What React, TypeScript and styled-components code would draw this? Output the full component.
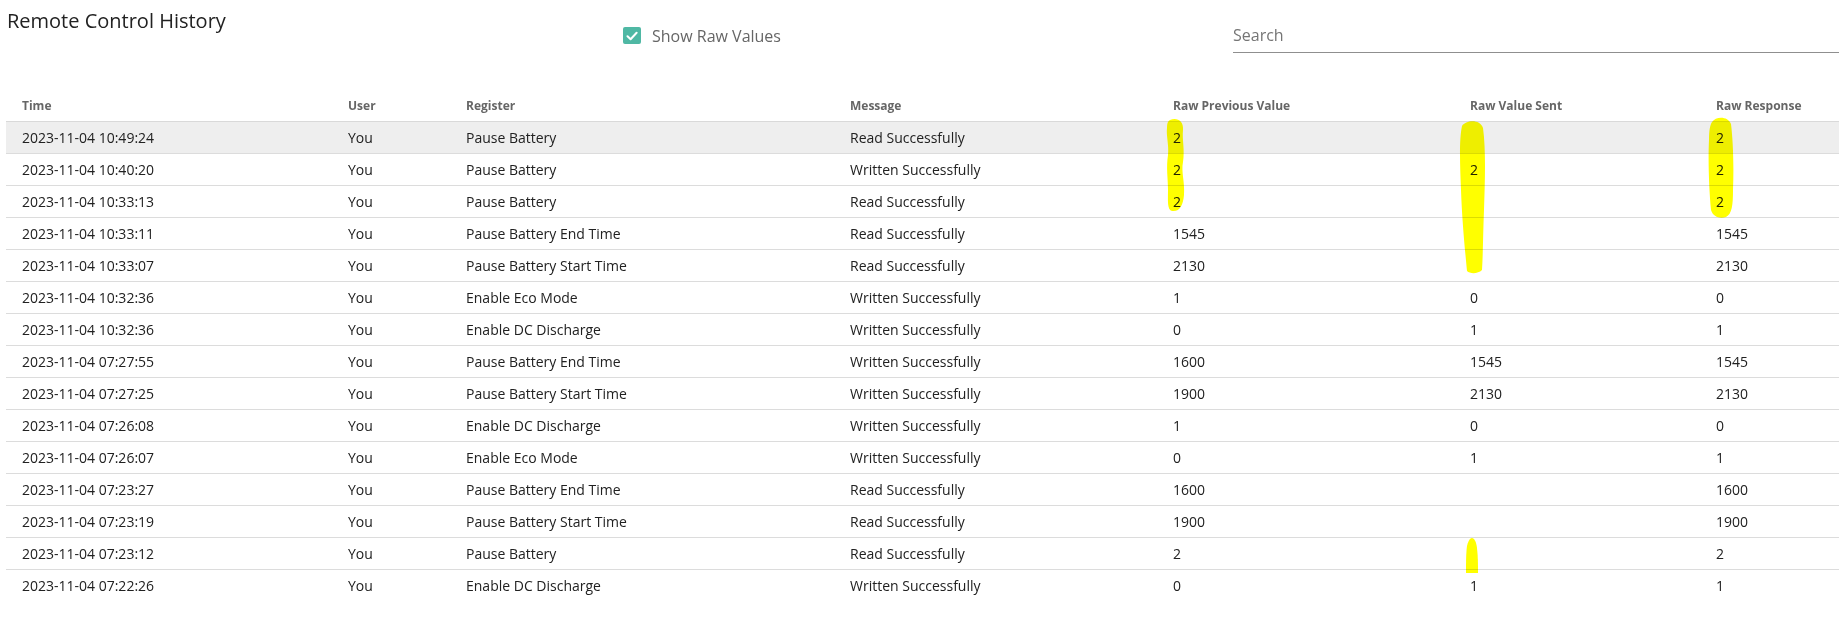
import React from "react";
import styled, { createGlobalStyle } from "styled-components";

const GlobalStyle = createGlobalStyle`
  html, body {
    margin: 0;
    padding: 0;
    background: #ffffff;
    font-family: "Open Sans", "Liberation Sans", sans-serif;
    color: #212121;
  }
  * { box-sizing: border-box; }
`;

const Page = styled.div`
  position: relative;
  width: 1839px;
  height: 632px;
  overflow: hidden;
  padding-left: 6px;
`;

const TopBar = styled.div`
  display: grid;
  grid-template-columns: 611px 611px 1fr;
  height: 89px;
`;

const Title = styled.h1`
  margin: 7px 0 0 1px;
  font-size: 20px;
  font-weight: 400;
  line-height: 27px;
  color: #222;
`;

const CheckLabel = styled.label`
  display: flex;
  align-items: center;
  gap: 11px;
  height: 17px;
  margin-top: 27px;
  padding-left: 6px;
  font-size: 16px;
  color: #666;
`;

const CheckBox = styled.span`
  display: inline-flex;
  align-items: center;
  justify-content: center;
  width: 18px;
  height: 17px;
  border-radius: 2px;
  background: #4fb8a4;
`;

const SearchInput = styled.input`
  display: block;
  width: calc(100% - 5px);
  margin: 22px 0 0 5px;
  height: 31px;
  padding: 0 0 5px 0;
  border: none;
  border-bottom: 1px solid #8f8f8f;
  outline: none;
  background: transparent;
  font-family: "Open Sans", "Liberation Sans", sans-serif;
  font-size: 16px;
  color: #333;
  &::placeholder { color: #757575; }
`;

const Table = styled.table`
  width: 100%;
  border-collapse: collapse;
  table-layout: fixed;
`;

const HeadCell = styled.th`
  height: 32px;
  padding: 2px 0 0 16px;
  text-align: left;
  font-size: 12px;
  font-weight: 700;
  color: #666;
  border-bottom: 1px solid #d9d9d9;
  white-space: nowrap;
`;

const Row = styled.tr<{ $active?: boolean }>`
  height: 32px;
  background: ${(p) => (p.$active ? "#eeeeee" : "transparent")};
  &:not(:last-child) td { border-bottom: 1px solid #dcdcdc; }
`;

const Cell = styled.td`
  padding: 0 0 0 16px;
  font-size: 14px;
  color: #212121;
  white-space: nowrap;
`;

const Highlights = styled.svg`
  position: absolute;
  top: 0;
  left: 0;
  pointer-events: none;
  mix-blend-mode: multiply;
`;

type Entry = [string, string, string, string, string, string, string];

const rows: Entry[] = [
  ["2023-11-04 10:49:24", "You", "Pause Battery", "Read Successfully", "2", "", "2"],
  ["2023-11-04 10:40:20", "You", "Pause Battery", "Written Successfully", "2", "2", "2"],
  ["2023-11-04 10:33:13", "You", "Pause Battery", "Read Successfully", "2", "", "2"],
  ["2023-11-04 10:33:11", "You", "Pause Battery End Time", "Read Successfully", "1545", "", "1545"],
  ["2023-11-04 10:33:07", "You", "Pause Battery Start Time", "Read Successfully", "2130", "", "2130"],
  ["2023-11-04 10:32:36", "You", "Enable Eco Mode", "Written Successfully", "1", "0", "0"],
  ["2023-11-04 10:32:36", "You", "Enable DC Discharge", "Written Successfully", "0", "1", "1"],
  ["2023-11-04 07:27:55", "You", "Pause Battery End Time", "Written Successfully", "1600", "1545", "1545"],
  ["2023-11-04 07:27:25", "You", "Pause Battery Start Time", "Written Successfully", "1900", "2130", "2130"],
  ["2023-11-04 07:26:08", "You", "Enable DC Discharge", "Written Successfully", "1", "0", "0"],
  ["2023-11-04 07:26:07", "You", "Enable Eco Mode", "Written Successfully", "0", "1", "1"],
  ["2023-11-04 07:23:27", "You", "Pause Battery End Time", "Read Successfully", "1600", "", "1600"],
  ["2023-11-04 07:23:19", "You", "Pause Battery Start Time", "Read Successfully", "1900", "", "1900"],
  ["2023-11-04 07:23:12", "You", "Pause Battery", "Read Successfully", "2", "", "2"],
  ["2023-11-04 07:22:26", "You", "Enable DC Discharge", "Written Successfully", "0", "1", "1"],
];

const columns = [
  { label: "Time", width: 326 },
  { label: "User", width: 118 },
  { label: "Register", width: 384 },
  { label: "Message", width: 323 },
  { label: "Raw Previous Value", width: 297 },
  { label: "Raw Value Sent", width: 246 },
  { label: "Raw Response", width: 139 },
];

export default function App() {
  return (
    <>
      <GlobalStyle />
      <Page>
        <TopBar>
          <Title>Remote Control History</Title>
          <div>
            <CheckLabel>
              <CheckBox>
                <svg width="12" height="10" viewBox="0 0 12 10">
                  <path d="M1.5 5.2 L4.6 8.2 L10.6 1.8" fill="none" stroke="#fff" strokeWidth="2" strokeLinecap="round" strokeLinejoin="round" />
                </svg>
              </CheckBox>
              Show Raw Values
            </CheckLabel>
          </div>
          <div>
            <SearchInput placeholder="Search" />
          </div>
        </TopBar>
        <Table>
          <colgroup>
            {columns.map((c) => (
              <col key={c.label} style={{ width: c.width }} />
            ))}
          </colgroup>
          <thead>
            <tr>
              {columns.map((c) => (
                <HeadCell key={c.label}>{c.label}</HeadCell>
              ))}
            </tr>
          </thead>
          <tbody>
            {rows.map((r, i) => (
              <Row key={i} $active={i === 0}>
                {r.map((v, j) => (
                  <Cell key={j}>{v}</Cell>
                ))}
              </Row>
            ))}
          </tbody>
        </Table>
        <Highlights width="1839" height="632" viewBox="0 0 1839 632">
          <g fill="#ffff00">
            <path d="M1170 120 C1176 117, 1184 120, 1183 130 C1182 140, 1185 150, 1183 162 C1181 172, 1185 182, 1184 195 C1183 205, 1180 212, 1172 211 C1167 210, 1168 200, 1168 190 C1168 178, 1166 168, 1168 155 C1169 145, 1166 135, 1167 128 C1167 123, 1168 121, 1170 120 Z" />
            <path d="M1462 126 C1466 120, 1480 119, 1483 128 C1486 150, 1485 180, 1484 210 C1483 235, 1483 255, 1482 270 C1478 274, 1470 274, 1467 271 C1465 250, 1462 220, 1461 190 C1460 165, 1459 140, 1462 126 Z" />
            <path d="M1712 122 C1716 116, 1728 116, 1731 124 C1733 140, 1734 165, 1733 190 C1733 205, 1732 214, 1726 217 C1720 219, 1713 217, 1711 210 C1709 190, 1708 160, 1709 140 C1709 130, 1710 125, 1712 122 Z" />
            <path d="M1470 539 C1473 536, 1476 540, 1477 548 C1478 556, 1478 565, 1478 573 L1466 573 C1466 563, 1466 553, 1467 546 C1468 542, 1469 540, 1470 539 Z" />
          </g>
        </Highlights>
      </Page>
    </>
  );
}
